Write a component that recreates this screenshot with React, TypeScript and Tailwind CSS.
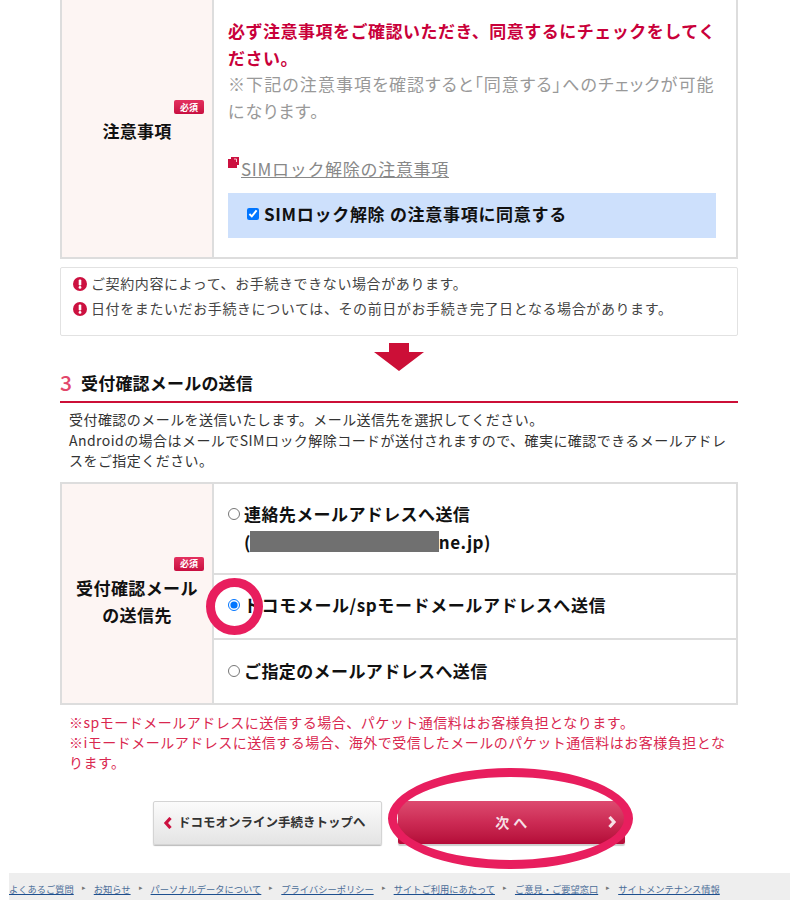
import React from "react";

const jp = "font-['Noto_Sans_CJK_JP','Noto_Sans',sans-serif]";

function RequiredBadge({ className }: { className?: string }) {
  return (
    <span className={`self-end flex items-center justify-center w-[30px] h-[14px] rounded-[2px] bg-gradient-to-b from-[#e4305f] to-[#c80d40] text-white text-[9px] font-bold leading-none ${className ?? ""}`}>
      必須
    </span>
  );
}

function AlertIcon() {
  return (
    <svg className="w-[14px] h-[14px] shrink-0" viewBox="0 0 14 14">
      <circle cx="7" cy="7" r="7" fill="#cc1140" />
      <rect x="5.7" y="2.4" width="2.6" height="6" rx="1.2" fill="#fff" />
      <circle cx="7" cy="10.4" r="1.4" fill="#fff" />
    </svg>
  );
}

function Chevron({ color, direction }: { color: string; direction: "left" | "right" }) {
  return (
    <svg className="w-[9px] h-[12px] shrink-0" viewBox="0 0 9 12" fill="none">
      <path
        d={direction === "left" ? "M7.5 1 L3 6 L7.5 11" : "M1.5 1 L6 6 L1.5 11"}
        stroke={color}
        strokeWidth="3.2"
      />
    </svg>
  );
}

const footerLinks = [
  "よくあるご質問",
  "お知らせ",
  "パーソナルデータについて",
  "プライバシーポリシー",
  "サイトご利用にあたって",
  "ご意見・ご要望窓口",
  "サイトメンテナンス情報",
];

export default function App() {
  return (
    <div className={`relative w-[800px] h-[900px] overflow-hidden bg-white ${jp}`}>
      <div className="ml-[60px] w-[678px]">
        {/* Notes table */}
        <div className="flex h-[259px] border-x-2 border-b-2 border-[#dddddd]">
          <div className="w-[152px] shrink-0 flex flex-col justify-center pb-[14px] bg-[#fdf5f3] border-r-2 border-[#dddddd] pl-[8px] pr-[8px]">
            <RequiredBadge />
            <div className="mt-[5px] text-center text-[17px] tracking-[0.3px] leading-[24px] font-bold text-[#111111]">注意事項</div>
          </div>
          <div className="flex-1 pl-[14px] pr-[20px] pt-[17px]">
            <p className="text-[17px] leading-[27px] font-bold text-[#c9003a] tracking-[0.5px]">
              必ず注意事項をご確認いただき、同意するにチェックをしてください。
            </p>
            <p className="-mt-[1px] text-[17px] leading-[27px] text-[#999999] tracking-[1.1px] [font-feature-settings:'palt']">
              ※下記の注意事項を確認すると「同意する」へのチェックが可能になります。
            </p>
            <div className="mt-[32px] flex items-start h-[30px]">
              <svg className="w-[12px] h-[12px] mt-[1px] shrink-0" viewBox="0 0 12 12">
                <rect x="0" y="2" width="9" height="9" fill="#cc1140" />
                <rect x="3" y="0" width="8" height="8" fill="#cc1140" />
                <path d="M6 2 H8.5 V5" stroke="#f7c9d4" strokeWidth="1" fill="none" />
              </svg>
              <a className="ml-[1px] mt-[1px] text-[17px] tracking-[0.7px] leading-[24px] text-[#888888] underline">SIMロック解除の注意事項</a>
            </div>
            <div className="mt-[7px] h-[45px] flex items-center pl-[19px] pb-[3px] bg-[#cde0fc]">
              <input type="checkbox" checked readOnly className="w-[12px] h-[12px] m-0 mr-[5px]" />
              <span className="text-[17px] tracking-[0.7px] font-bold text-[#111111]">SIMロック解除 の注意事項に同意する</span>
            </div>
          </div>
        </div>

        {/* Warning box */}
        <div className="mt-[8px] h-[69px] border border-[#e2e2e2] rounded-[2px] pl-[12px] pt-[5px] text-[14px] tracking-[0.6px] text-[#444444]">
          <div className="flex items-center gap-[4px] h-[25px] -mt-[2px]"><AlertIcon />ご契約内容によって、お手続きできない場合があります。</div>
          <div className="flex items-center gap-[4px] h-[25px]"><AlertIcon />日付をまたいだお手続きについては、その前日がお手続き完了日となる場合があります。</div>
        </div>

        {/* Down arrow */}
        <div className="flex justify-center mt-[7px]">
          <svg className="w-[50px] h-[28px]" viewBox="0 0 50 28">
            <path d="M15 0 H35 V9 H50 L25 28 L0 9 H15 Z" fill="#cc0f37" />
          </svg>
        </div>

        {/* Section heading */}
        <div className="flex items-center h-[30px] border-b-2 border-[#cc0f37] box-content -mt-[1px] pb-[1px]">
          <span className="text-[21px] leading-[24px] font-medium text-[#e2476b] mr-[9px] -mt-[7px]">3</span>
          <span className="text-[17px] tracking-[0.2px] font-bold text-[#111111] -mt-[4px]">受付確認メールの送信</span>
        </div>

        <p className="mt-[6px] px-[9px] text-[14px] tracking-[0.45px] leading-[20.5px] text-[#333333]">
          受付確認のメールを送信いたします。メール送信先を選択してください。
          <br />
          Androidの場合はメールでSIMロック解除コードが送付されますので、確実に確認できるメールアドレスをご指定ください。
        </p>

        {/* Mail destination table */}
        <div className="mt-[11px] flex h-[223px] border-2 border-[#dddddd]">
          <div className="w-[152px] shrink-0 flex flex-col justify-center pb-[2px] bg-[#fdf5f3] border-r-2 border-[#dddddd] px-[8px]">
            <RequiredBadge />
            <div className="mt-[3px] text-center text-[17px] tracking-[0.4px] leading-[27px] font-bold text-[#111111]">
              受付確認メール<br />の送信先
            </div>
          </div>
          <div className="flex-1 flex flex-col text-[17px] tracking-[0.4px] font-bold text-[#111111]">
            <div className="h-[91px] border-b-2 border-[#dddddd] pl-[14px] pt-[16px] leading-[28px]">
              <div className="flex items-center">
                <input type="radio" readOnly className="w-[12px] h-[12px] m-0 mr-[4px]" />
                連絡先メールアドレスへ送信
              </div>
              <div className="flex items-center pl-[16px]">
                (
                <span className="-ml-[1px] w-[189px] h-[21px] bg-[#707070]" />
                ne.jp)
              </div>
            </div>
            <div className="h-[65px] flex items-center border-b-2 border-[#dddddd] pl-[14px] pb-[2px] tracking-[0.6px]">
              <input type="radio" checked readOnly className="w-[12px] h-[12px] m-0 mr-[4px]" />
              ドコモメール/spモードメールアドレスへ送信
            </div>
            <div className="flex-1 flex items-center pl-[14px]">
              <input type="radio" readOnly className="w-[12px] h-[12px] m-0 mr-[4px]" />
              ご指定のメールアドレスへ送信
            </div>
          </div>
        </div>

        <p className="mt-[7px] px-[9px] text-[14px] tracking-[0.5px] leading-[20px] text-[#d9274f]">
          ※spモードメールアドレスに送信する場合、パケット通信料はお客様負担となります。
          <br />
          ※iモードメールアドレスに送信する場合、海外で受信したメールのパケット通信料はお客様負担となります。
        </p>

        {/* Buttons */}
        <div className="mt-[29px] ml-[93px] flex items-start gap-[16px]">
          <button className="w-[229px] h-[44px] flex items-center pl-[9px] gap-[6px] rounded-[2px] border border-[#d4d4d4] bg-gradient-to-b from-[#fbfbfb] to-[#e4e4e4] shadow-[0_1px_1px_#bbbbbb] text-[12.5px] font-bold text-[#333333]">
            <Chevron color="#cc1140" direction="left" />
            ドコモオンライン手続きトップへ
          </button>
          <button className="relative w-[227px] h-[43px] flex items-center justify-center rounded-[2px] bg-gradient-to-b from-[#dd4a70] via-[#cc2a54] to-[#b40a38] shadow-[0_2px_1px_#cccccc] text-[14px] tracking-[0.5px] font-bold text-[#f6dfe5]">
            次 へ
            <span className="absolute right-[8px] top-[15px]">
              <Chevron color="#f6dfe5" direction="right" />
            </span>
          </button>
        </div>
      </div>

      {/* Footer */}
      <div className="absolute left-[9px] right-[10px] top-[873px] h-[27px] bg-[#eeeeee] flex items-center overflow-hidden pt-[7px] text-[9.25px] text-[#4b6d98]">
        {footerLinks.map((label, i) => (
          <React.Fragment key={label}>
            {i > 0 && <span className="w-[20px] text-center text-[7px] text-[#777777] -mt-[5px]">▸</span>}
            <a className="underline decoration-[#1d4f8f] whitespace-nowrap">{label}</a>
          </React.Fragment>
        ))}
      </div>

      {/* Hand-drawn highlight marks */}
      <div className="absolute left-[206px] top-[578px] w-[57px] h-[57px] rounded-full border-[9px] border-[#e81e5e]" />
      <div className="absolute left-[388px] top-[768px] w-[245px] h-[101px] rounded-[50%] border-[9px] border-[#e81e5e]" />
    </div>
  );
}
